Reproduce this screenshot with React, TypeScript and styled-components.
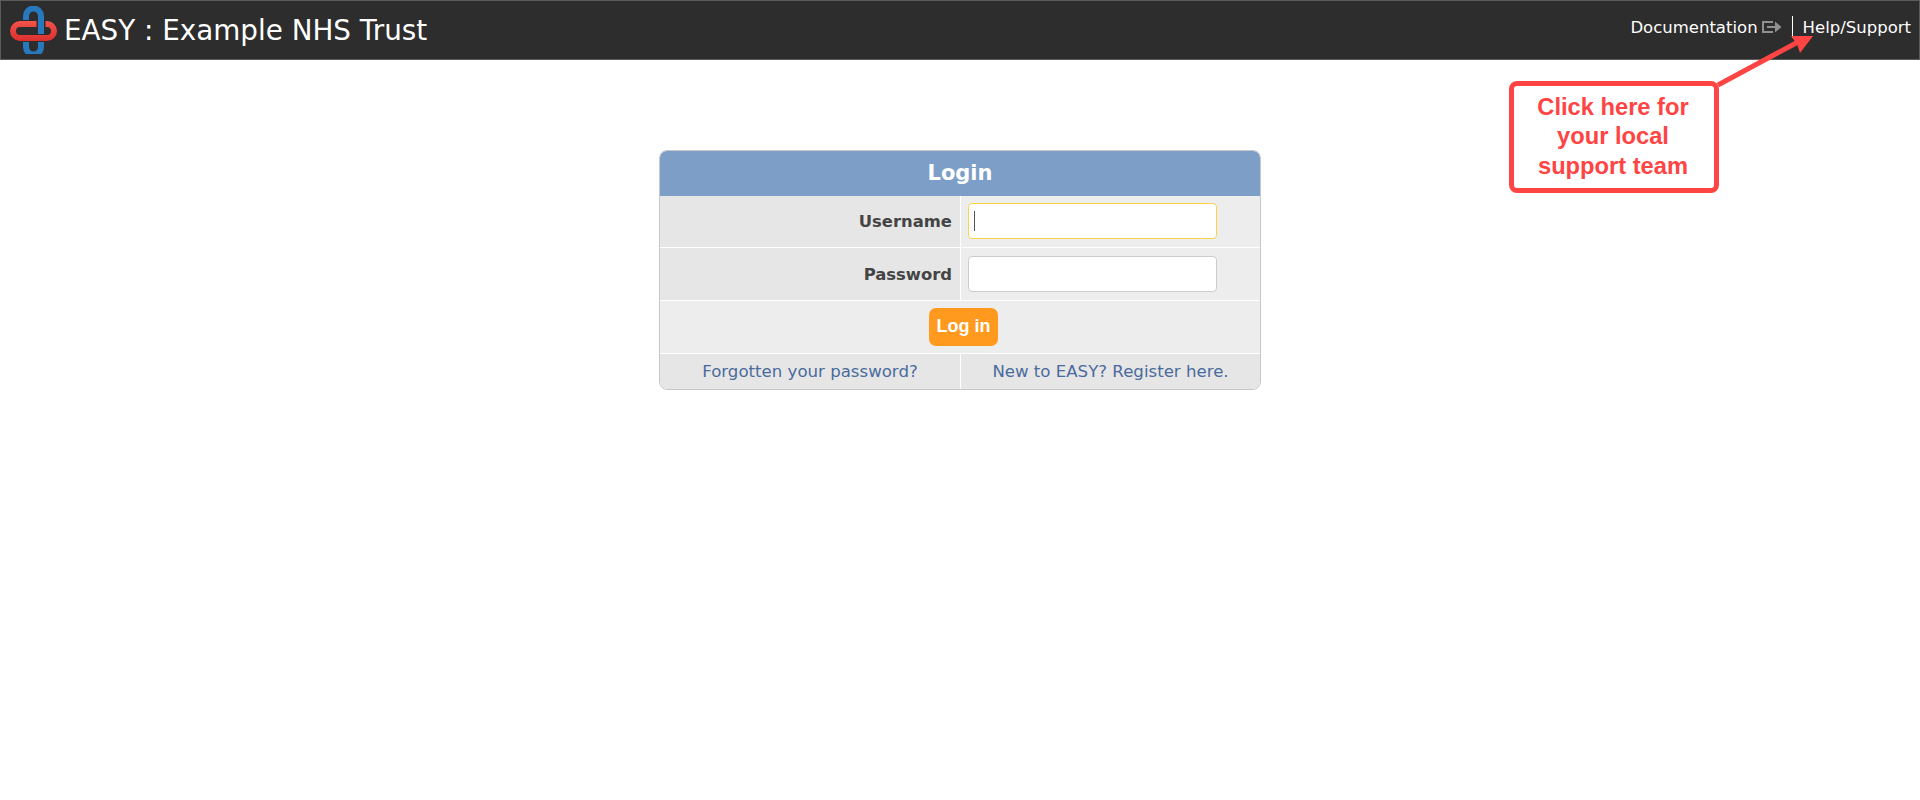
import React from "react";
import styled, { createGlobalStyle } from "styled-components";

const Global = createGlobalStyle`
  html, body { margin: 0; padding: 0; background: #fff; }
  body { font-family: "DejaVu Sans", Verdana, sans-serif; color: #3c3c3c; }
  #root { min-height: 800px; position: relative; overflow: hidden; }
`;

const TopBar = styled.header`
  height: 60px;
  box-sizing: border-box;
  background: #2d2d2d;
  border: 1px solid #5a5a5a;
  display: flex;
  align-items: center;
  justify-content: space-between;
  padding: 0 8px;
`;
const Brand = styled.div`
  display: flex;
  align-items: center;
  gap: 7px;
  height: 100%;
`;
const Title = styled.h1`
  margin: 1px 0 0;
  font-size: 27.8px;
  font-weight: 400;
  color: #fff;
  white-space: nowrap;
`;
const Nav = styled.nav`
  display: flex;
  align-items: center;
  height: 100%;
  padding-bottom: 6px;
  box-sizing: border-box;
  font-size: 16.5px;
`;
const NavLink = styled.a<{ $divided?: boolean }>`
  color: #fff;
  text-decoration: none;
  display: flex;
  align-items: center;
  gap: 4px;
  height: 22px;
  padding: 0 0 0 ${(p) => (p.$divided ? "10px" : "0")};
  margin-left: ${(p) => (p.$divided ? "10px" : "0")};
  border-left: ${(p) => (p.$divided ? "1px solid #fff" : "none")};
`;
const Main = styled.main`
  display: flex;
  justify-content: center;
  padding-top: 90px;
`;
const Card = styled.section`
  width: 602px;
  box-sizing: border-box;
  border: 1px solid #c8c8c8;
  border-radius: 8px;
  overflow: hidden;
  background: #fff;
`;
const CardHead = styled.h2`
  margin: 0;
  height: 45px;
  line-height: 45px;
  background: #7c9ec7;
  color: #fff;
  text-align: center;
  font-size: 21px;
  font-weight: 700;
`;
const Row = styled.div<{ $h: number }>`
  display: grid;
  grid-template-columns: 300px 1fr;
  column-gap: 1px;
  height: ${(p) => p.$h}px;
  margin-bottom: 1px;
  &:last-child { margin-bottom: 0; }
`;
const LabelCell = styled.label`
  background: #e6e6e6;
  display: flex;
  align-items: center;
  justify-content: flex-end;
  padding-right: 8px;
  font-size: 16.4px;
  font-weight: 700;
  color: #444;
`;
const InputCell = styled.div<{ $top: number }>`
  background: #ededed;
  display: flex;
  align-items: flex-start;
  padding: ${(p) => p.$top}px 0 0 7px;
`;
const Field = styled.div<{ $focused?: boolean }>`
  width: 249px;
  height: 36px;
  box-sizing: border-box;
  background: #fff;
  border: 1px solid ${(p) => (p.$focused ? "#fbd34a" : "#cccccc")};
  border-radius: 4px;
  display: flex;
  align-items: center;
  padding-left: 5px;
`;
const Caret = styled.span`
  width: 1px;
  height: 20px;
  background: #555;
`;
const ActionRow = styled.div`
  height: 52px;
  margin-bottom: 1px;
  background: #ededed;
  display: flex;
  align-items: center;
  justify-content: center;
`;
const LoginButton = styled.button`
  width: 69px;
  height: 38px;
  margin: 0 0 1px 7px;
  border: 0;
  border-radius: 7px;
  background: #ff9a1e;
  color: #fff;
  font-family: "Liberation Sans", Arial, sans-serif;
  font-size: 18px;
  font-weight: 700;
  padding: 0;
`;
const LinkCell = styled.a`
  background: #e6e6e6;
  color: #4a6b9d;
  font-size: 16.6px;
  display: flex;
  align-items: center;
  justify-content: center;
  text-decoration: none;
`;
const Callout = styled.div`
  position: absolute;
  left: 1509px;
  top: 81px;
  width: 210px;
  height: 112px;
  box-sizing: border-box;
  border: 5px solid #ff4444;
  border-radius: 8px;
  background: #fff;
  color: #ff4444;
  font-family: "Liberation Sans", Arial, sans-serif;
  font-size: 23.7px;
  font-weight: 700;
  line-height: 29.4px;
  text-align: center;
  padding: 7px 2px 0 0;
`;
const ArrowSvg = styled.svg`
  position: absolute;
  left: 1700px;
  top: 20px;
`;

const DARK = "#2d2d2d";
const BLUE_COL = "#2878bd";
const blueLoop = "M26 16a7.5 7.5 0 0 1 15 0v31a7.5 7.5 0 0 1-15 0z";
const redLoop = "M20 24h27a7 7 0 0 1 0 14H20a7 7 0 0 1 0-14z";

const Logo = () => (
  <svg width="48" height="48" viewBox="9 6 48 48" fill="none">
    <defs>
      <linearGradient id="logoRed" gradientUnits="userSpaceOnUse" x1="0" y1="21" x2="0" y2="42">
        <stop offset="0" stopColor="#f4524c" />
        <stop offset="1" stopColor="#d92f2c" />
      </linearGradient>
    </defs>
    <path d={blueLoop} stroke={BLUE_COL} strokeWidth="6" />
    <path d="M26 25v12" stroke={DARK} strokeWidth="8" />
    <path d={redLoop} stroke={DARK} strokeWidth="8" />
    <path d={redLoop} stroke="url(#logoRed)" strokeWidth="6" />
    <path d="M41 18v14" stroke={DARK} strokeWidth="9" />
    <path d="M41 16v18" stroke={BLUE_COL} strokeWidth="6" />
  </svg>
);

const ExitIcon = () => (
  <svg width="20" height="12" viewBox="0 0 20 12" fill="none" stroke="#909090" strokeWidth="2">
    <path d="M11 1H1v10h10" />
    <path d="M5 6h9" />
    <path d="M13 0.5 19.5 6 13 11.5z" fill="#909090" stroke="none" />
  </svg>
);

export default function App() {
  return (
    <>
      <Global />
      <TopBar>
        <Brand>
          <Logo />
          <Title>EASY : Example NHS Trust</Title>
        </Brand>
        <Nav>
          <NavLink href="#">
            Documentation <ExitIcon />
          </NavLink>
          <NavLink href="#" $divided>
            Help/Support
          </NavLink>
        </Nav>
      </TopBar>
      <Main>
        <Card>
          <CardHead>Login</CardHead>
          <Row $h={51}>
            <LabelCell>Username</LabelCell>
            <InputCell $top={7}>
              <Field $focused>
                <Caret />
              </Field>
            </InputCell>
          </Row>
          <Row $h={52}>
            <LabelCell>Password</LabelCell>
            <InputCell $top={8}>
              <Field />
            </InputCell>
          </Row>
          <ActionRow>
            <LoginButton>Log in</LoginButton>
          </ActionRow>
          <Row $h={35}>
            <LinkCell href="#">Forgotten your password?</LinkCell>
            <LinkCell href="#">New to EASY? Register here.</LinkCell>
          </Row>
        </Card>
      </Main>
      <ArrowSvg width="130" height="80" viewBox="0 0 130 80">
        <path d="M18 65 98 22" stroke="#ff4444" strokeWidth="5" />
        <path d="M113 16 H91 L97 24 L100 33 Z" fill="#ff4444" />
      </ArrowSvg>
      <Callout>
        Click here for
        <br />
        your local
        <br />
        support team
      </Callout>
    </>
  );
}
